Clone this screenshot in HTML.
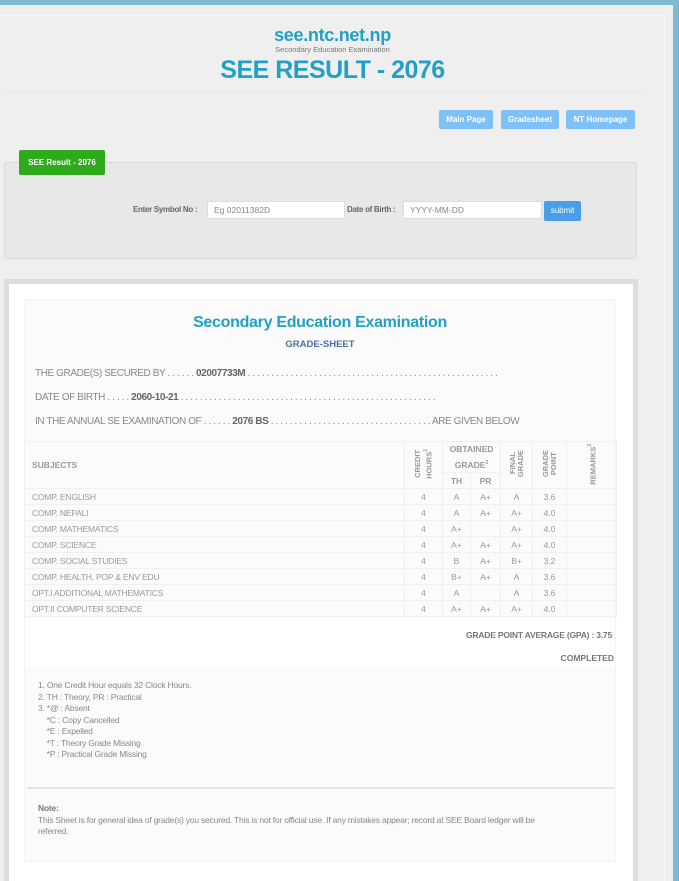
<!DOCTYPE html>
<html><head><meta charset="utf-8">
<style>
*{box-sizing:border-box;margin:0;padding:0}
html,body{width:679px;height:881px;overflow:hidden}
body{background:#7db9d0;font-family:"Liberation Sans",sans-serif;color:#777;position:relative}
.wrap{position:absolute;left:0;top:5px;width:673px;height:876px;background:#efefef;overflow:hidden}
.inner{position:absolute;left:0;top:10px;width:665px;height:866px;border-top:1px solid #f8f8f8;border-right:1px solid #f8f8f8}
.abs{position:absolute}
.c{text-align:center;left:0;width:665px}
.btn{position:absolute;top:105px;height:19px;background:#7ec0f8;color:#fff;font-size:8px;font-weight:bold;line-height:19px;text-align:center;border-radius:2px}
.box{position:absolute;height:18px;top:196px;background:#fff;border:1px solid #ddd;font-size:8.5px;color:#888;padding-left:6px;line-height:16px}
table{border-collapse:collapse;font-size:8.5px;color:#999;table-layout:fixed}
td,th{border:1px solid #f0f0f0;text-align:center;height:16px;padding:0;overflow:hidden;white-space:nowrap}
th{color:#999;font-weight:bold}
.vt{writing-mode:vertical-rl;transform:rotate(180deg);display:inline-block;font-size:7.5px;line-height:8px}
td.l{text-align:left;padding-left:7px;letter-spacing:-0.2px}
.ln{position:absolute;left:35px;font-size:10px;color:#888;white-space:nowrap;letter-spacing:-0.4px}
</style></head><body>
<div class="wrap">
<div class="inner"></div>
<div class="abs c" style="top:20px;font-size:18px;font-weight:bold;color:#22a0c8;letter-spacing:-0.3px">see.ntc.net.np</div>
<div class="abs c" style="top:40px;font-size:7.5px;color:#777">Secondary Education Examination</div>
<div class="abs c" style="top:51px;font-size:25px;font-weight:bold;color:#22a0c8;letter-spacing:-0.5px">SEE RESULT - 2076</div>
<div class="abs" style="left:3px;top:86px;width:640px;height:1px;background:#e6e6e6"></div>
<div class="btn" style="left:439px;width:54px">Main Page</div>
<div class="btn" style="left:501px;width:58px">Gradesheet</div>
<div class="btn" style="left:566px;width:69px">NT Homepage</div>
<div class="abs" style="left:4px;top:157px;width:633px;height:97px;background:#e8e8e8;border:1px solid #dadada;border-radius:3px"></div>
<div class="abs" style="left:19px;top:145px;width:86px;height:25px;background:#2eaa1c;color:#fff;font-size:8px;font-weight:bold;line-height:25px;text-align:center;border-radius:2px">SEE Result - 2076</div>
<div class="abs" style="left:133px;top:196px;font-size:8px;font-weight:bold;color:#666;line-height:18px;letter-spacing:-0.3px">Enter Symbol No :</div>
<div class="box" style="left:207px;width:138px">Eg 02011382D</div>
<div class="abs" style="left:347px;top:196px;font-size:8px;font-weight:bold;color:#666;line-height:18px;letter-spacing:-0.3px">Date of Birth :</div>
<div class="box" style="left:403px;width:139px">YYYY-MM-DD</div>
<div class="abs" style="left:544px;top:196px;width:37px;height:20px;background:#4a9de8;color:#fff;font-size:8px;line-height:20px;text-align:center;border-radius:2px">submit</div>

<div class="abs" style="left:4px;top:274px;width:634px;height:610px;background:#fff;border:5px solid #ddd;border-bottom:none"></div>
<div class="abs" style="left:24px;top:294px;width:592px;height:563px;background:#fbfbfb;border:1px solid #f3f3f3"></div>
<div class="abs" style="left:24px;top:309px;width:592px;text-align:center;font-size:16px;font-weight:bold;color:#22a0c8;letter-spacing:-0.3px">Secondary Education Examination</div>
<div class="abs" style="left:24px;top:334px;width:592px;text-align:center;font-size:9.5px;font-weight:bold;color:#4a6fa5">GRADE-SHEET</div>
<div class="ln" style="top:363px">THE GRADE(S) SECURED BY . . . . . . <b style="color:#666">02007733M</b> . . . . . . . . . . . . . . . . . . . . . . . . . . . . . . . . . . . . . . . . . . . . . . . . . . . . .</div>
<div class="ln" style="top:387px">DATE OF BIRTH . . . . . <b style="color:#666">2060-10-21</b> . . . . . . . . . . . . . . . . . . . . . . . . . . . . . . . . . . . . . . . . . . . . . . . . . . . . . .</div>
<div class="ln" style="top:411px">IN THE ANNUAL SE EXAMINATION OF . . . . . . <b style="color:#666">2076 BS</b> . . . . . . . . . . . . . . . . . . . . . . . . . . . . . . . . . . ARE GIVEN BELOW</div>

<table class="abs" style="left:24px;top:436px;width:592px">
<colgroup><col style="width:380px"><col style="width:38px"><col style="width:28px"><col style="width:30px"><col style="width:32px"><col style="width:34px"><col style="width:50px"></colgroup>
<tr><th rowspan="2" style="text-align:left;padding-left:7px;height:31px">SUBJECTS</th>
<th rowspan="2"><span class="vt">CREDIT<br>HOURS<sup style="font-size:5px">1</sup></span></th>
<th colspan="2" style="height:31px;line-height:14px">OBTAINED<br>GRADE<sup style="font-size:5px">2</sup></th>
<th rowspan="2"><span class="vt">FINAL<br>GRADE</span></th>
<th rowspan="2"><span class="vt">GRADE<br>POINT</span></th>
<th rowspan="2"><span class="vt">REMARKS<sup style="font-size:5px">3</sup></span></th></tr>
<tr><th style="height:16px">TH</th><th>PR</th></tr>
<tr><td class="l">COMP. ENGLISH</td><td>4</td><td>A</td><td>A+</td><td>A</td><td>3.6</td><td></td></tr>
<tr><td class="l">COMP. NEPALI</td><td>4</td><td>A</td><td>A+</td><td>A+</td><td>4.0</td><td></td></tr>
<tr><td class="l">COMP. MATHEMATICS</td><td>4</td><td>A+</td><td></td><td>A+</td><td>4.0</td><td></td></tr>
<tr><td class="l">COMP. SCIENCE</td><td>4</td><td>A+</td><td>A+</td><td>A+</td><td>4.0</td><td></td></tr>
<tr><td class="l">COMP. SOCIAL STUDIES</td><td>4</td><td>B</td><td>A+</td><td>B+</td><td>3.2</td><td></td></tr>
<tr><td class="l">COMP. HEALTH, POP &amp; ENV EDU</td><td>4</td><td>B+</td><td>A+</td><td>A</td><td>3.6</td><td></td></tr>
<tr><td class="l">OPT.I ADDITIONAL MATHEMATICS</td><td>4</td><td>A</td><td></td><td>A</td><td>3.6</td><td></td></tr>
<tr><td class="l">OPT.II COMPUTER SCIENCE</td><td>4</td><td>A+</td><td>A+</td><td>A+</td><td>4.0</td><td></td></tr>
</table>
<div class="abs" style="left:25px;top:614px;width:590px;height:47px;background:#fff"></div>
<div class="abs" style="left:400px;top:625px;width:212px;text-align:right;font-size:8.5px;font-weight:bold;color:#777;letter-spacing:-0.2px">GRADE POINT AVERAGE (GPA) : 3.75</div>
<div class="abs" style="left:400px;top:648px;width:214px;text-align:right;font-size:8.5px;font-weight:bold;color:#777">COMPLETED</div>
<div class="abs" style="left:38px;top:675px;font-size:8.5px;line-height:11.5px;color:#888;letter-spacing:-0.2px">1. One Credit Hour equals 32 Clock Hours.<br>2. TH : Theory, PR : Practical<br>3. *@ : Absent<br>&nbsp;&nbsp;&nbsp;&nbsp;*C : Copy Cancelled<br>&nbsp;&nbsp;&nbsp;&nbsp;*E : Expelled<br>&nbsp;&nbsp;&nbsp;&nbsp;*T : Theory Grade Missing<br>&nbsp;&nbsp;&nbsp;&nbsp;*P : Practical Grade Missing</div>
<div class="abs" style="left:27px;top:782px;width:587px;height:2px;background:#e4e4e4"></div>
<div class="abs" style="left:38px;top:798px;width:515px;font-size:8.5px;line-height:11.5px;color:#888;letter-spacing:-0.2px"><b style="color:#777">Note:</b><br>This Sheet is for general idea of grade(s) you secured. This is not for official use. If any mistakes appear; record at SEE Board ledger will be referred.</div>
</div>
</body></html>
